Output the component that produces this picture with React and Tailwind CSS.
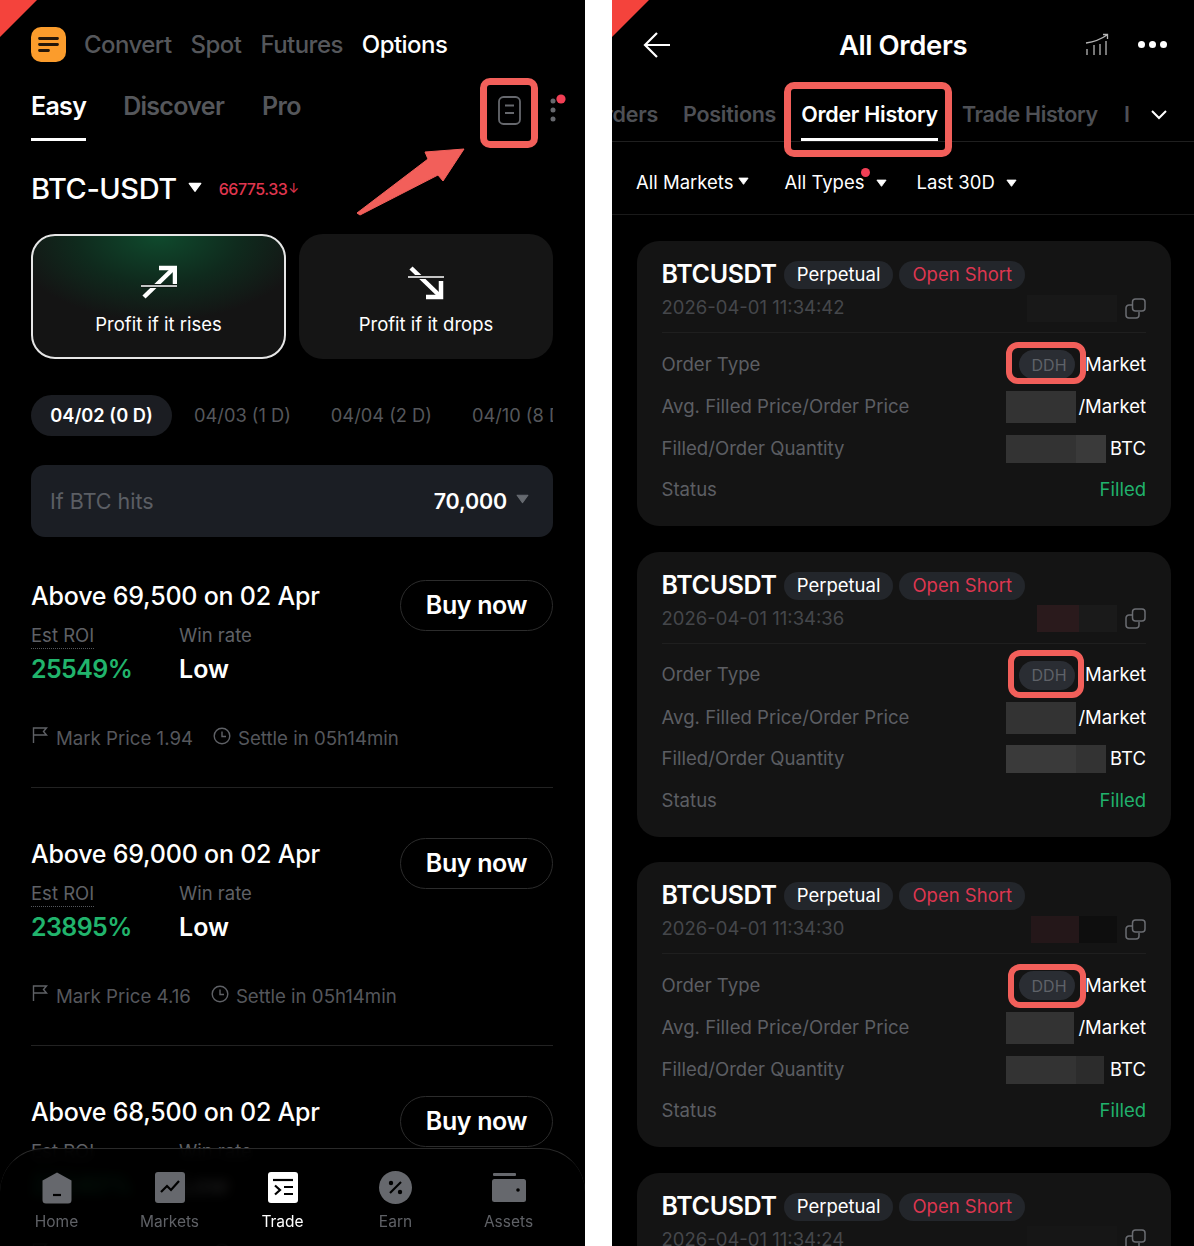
const Corner = () => (
  <svg className="absolute left-0 top-0" width="38" height="38" viewBox="0 0 38 38">
    <polygon points="0,0 37,0 0,37" fill="#f4433c" />
  </svg>
);

const Caret = ({ size = 12, color = '#fff' }) => (
  <svg width={size} height={size * 0.75} viewBox="0 0 12 9">
    <path d="M1 1.2h10L6 8z" fill={color} stroke={color} strokeLinejoin="round" strokeWidth="1" />
  </svg>
);

function Logo() {
  return (
    <svg width="35" height="35" viewBox="0 0 35 35">
      <rect width="35" height="35" rx="10" fill="#fb9c2c" />
      <path d="M8.5 11.5h18M8.5 17.5h18M8.5 23.5h9" stroke="#23160a" strokeWidth="2.8" strokeLinecap="round" />
    </svg>
  );
}

function RiseIcon() {
  return (
    <svg width="36" height="34" viewBox="0 0 36 34" fill="none">
      <path d="M3 32 L33 3" stroke="#fff" strokeWidth="4.5" />
      <path d="M18 3h16v16" stroke="#fff" strokeWidth="4.5" />
      <path d="M0 21h36" stroke="#0e1a14" strokeWidth="4" />
      <path d="M0 21h36" stroke="#fff" strokeWidth="1.6" />
    </svg>
  );
}

function DropIcon() {
  return (
    <svg width="36" height="34" viewBox="0 0 36 34" fill="none">
      <path d="M3 2 L33 31" stroke="#fff" strokeWidth="4.5" />
      <path d="M33 15v16H18" stroke="#fff" strokeWidth="4.5" />
      <path d="M0 11h36" stroke="#151515" strokeWidth="4" />
      <path d="M0 11h36" stroke="#fff" strokeWidth="1.6" />
    </svg>
  );
}

function MarketItem({ strike, roi, mark, settleGap }) {
  return (
    <div className="h-[258px] shrink-0">
      <div className="flex h-[210px] items-start justify-between border-b border-[#222]">
        <div>
          <div className="mt-[2px] text-[25px] leading-[32px] font-medium tracking-[-0.22px] text-white">
            Above {strike} on 02 Apr
          </div>
          <div className="mt-[11px] flex">
            <div className="w-[148px]">
              <span className="inline-block border-b border-dotted border-[#55575c] text-[18.5px] leading-[25px] text-[#5f6166]">Est ROI</span>
              <div className="mt-[5px] text-[25px] leading-[30px] font-semibold tracking-[-0.6px] text-[#21b46c]">{roi}</div>
            </div>
            <div>
              <div className="text-[18.5px] leading-[25px] text-[#5f6166]">Win rate</div>
              <div className="mt-[6px] text-[25px] leading-[30px] font-semibold text-white">Low</div>
            </div>
          </div>
          <div className="mt-[41px] flex items-center text-[18.65px] leading-[26px] text-[#55575c]">
            <svg width="17" height="18" viewBox="0 0 17 18" fill="none" stroke="#5f6166" strokeWidth="1.4" className="mr-[8px] -mt-[6px]">
              <path d="M2.5 17V2h13l-3 3.5 3 3.5h-13" />
            </svg>
            <span>Mark Price {mark}</span>
            <svg width="18" height="18" viewBox="0 0 18 18" fill="none" stroke="#5f6166" strokeWidth="1.4" className="mr-[7px] -mt-[4px]" style={{ marginLeft: settleGap }}>
              <circle cx="9" cy="9" r="7.8" />
              <path d="M9 4.5V9.5H13" />
            </svg>
            <span>Settle in 05h14min</span>
          </div>
        </div>
        <div className="mt-[2px] flex h-[51px] w-[153px] items-center justify-center rounded-full border border-[#2c2c2c] text-[25px] font-semibold tracking-[-0.35px] text-white">
          Buy now
        </div>
      </div>
    </div>
  );
}

function NavIcon({ name }) {
  const fill = name === 'trade' ? '#fff' : '#66686d';
  if (name === 'home') {
    return (
      <svg width="30" height="32" viewBox="0 0 30 32">
        <path d="M15 0.5 L29.5 8.5 V28a3.5 3.5 0 0 1-3.5 3.5H4A3.5 3.5 0 0 1 .5 28V8.5z" fill={fill} />
        <path d="M11 23h8" stroke="#000" strokeWidth="2.2" />
      </svg>
    );
  }
  if (name === 'markets') {
    return (
      <svg width="30" height="31" viewBox="0 0 30 31">
        <rect width="30" height="31" rx="3" fill={fill} />
        <path d="M6 20l6-6 4 4 8-9" stroke="#000" strokeWidth="2.2" fill="none" />
      </svg>
    );
  }
  if (name === 'trade') {
    return (
      <svg width="30" height="31" viewBox="0 0 30 31">
        <rect width="30" height="31" rx="3" fill={fill} />
        <path d="M5 8h20" stroke="#000" strokeWidth="2.2" />
        <path d="M7 13.5l5 4.5-5 4.5" stroke="#000" strokeWidth="2.2" fill="none" />
        <path d="M16 15h9M16 22h9" stroke="#000" strokeWidth="2.2" />
      </svg>
    );
  }
  if (name === 'earn') {
    return (
      <svg width="33" height="33" viewBox="0 0 33 33">
        <circle cx="16.5" cy="16.5" r="16.5" fill={fill} />
        <path d="M22 11l-11 11" stroke="#000" strokeWidth="2.2" />
        <circle cx="12" cy="12" r="2.2" fill="#000" />
        <circle cx="21" cy="21" r="2.2" fill="#000" />
      </svg>
    );
  }
  return (
    <svg width="34" height="29" viewBox="0 0 34 29">
      <rect x="1" y="0" width="23" height="3" rx="1" fill={fill} />
      <rect y="6" width="34" height="23" rx="2.5" fill={fill} />
      <circle cx="26" cy="17" r="1.8" fill="#000" />
    </svg>
  );
}

function BottomNav() {
  const items = [
    ['home', 'Home'],
    ['markets', 'Markets'],
    ['trade', 'Trade'],
    ['earn', 'Earn'],
    ['assets', 'Assets'],
  ];
  return (
    <div className="absolute bottom-0 left-0 right-0 h-[98px] rounded-t-[44px] border-t border-[#2a2a2a] bg-black/90 backdrop-blur-[6px]">
      <div className="flex pt-[22px]">
        {items.map(([name, label]) => (
          <div key={name} className="flex w-[113px] flex-col items-center">
            <div className="flex h-[33px] items-center"><NavIcon name={name} /></div>
            <div className={`mt-[8px] text-[15.5px] leading-[20px] ${name === 'trade' ? 'text-white' : 'text-[#5f6166]'}`}>{label}</div>
          </div>
        ))}
      </div>
    </div>
  );
}

function LeftPhone() {
  return (
    <div className="relative h-[1246px] w-[585px] shrink-0 overflow-hidden bg-black">
      <Corner />
      <div className="pl-[31px] pr-[32px] pt-[27px]">
        <div className="flex h-[35px] items-center text-[24px] font-medium tracking-[-0.55px] text-[#55575b]">
          <Logo />
          <span className="ml-[18px]">Convert</span>
          <span className="ml-[19px]">Spot</span>
          <span className="ml-[19px]">Futures</span>
          <span className="ml-[19px] text-white">Options</span>
        </div>
        <div className="relative mt-[26px] flex h-[53px] text-[25px] font-semibold tracking-[-0.7px] text-[#55575b]">
          <div className="h-[53px] border-b-[3px] border-white pt-[2px] leading-[32px] text-white">Easy</div>
          <div className="ml-[37px] pt-[2px] leading-[32px]">Discover</div>
          <div className="ml-[38px] pt-[2px] leading-[32px]">Pro</div>
          <svg width="16" height="32" viewBox="0 0 16 32" className="absolute left-[519px] top-[3px]">
            <circle cx="3" cy="10" r="2.5" fill="#66686d" />
            <circle cx="3" cy="19" r="2.5" fill="#66686d" />
            <circle cx="3" cy="28" r="2.5" fill="#66686d" />
            <circle cx="11" cy="8" r="4.6" fill="#f23f55" />
          </svg>
        </div>
        <div className="mt-[29px] flex h-[38px] items-center">
          <span className="text-[29px] font-medium tracking-[-0.45px] text-white">BTC-USDT</span>
          <span className="ml-[11px] -mt-[3px]"><Caret size={14} /></span>
          <span className="ml-[17px] text-[16px] font-medium tracking-[-0.5px] text-[#e0364f]">66775.33</span>
          <span className="ml-[1px] text-[13px] text-[#e0364f]">↓</span>
        </div>
        <div className="mt-[26px] flex gap-[13px]">
          <div className="flex h-[125px] w-[255px] shrink-0 flex-col items-center rounded-[24px] border-2 border-[#e6e6e6] bg-[radial-gradient(ellipse_150px_85px_at_50%_0%,#0f4a2d_0%,#0f2a1d_55%,#141414_100%)] pt-[29px]">
            <RiseIcon />
            <div className="mt-[12px] text-[18.5px] leading-[26px] text-white">Profit if it rises</div>
          </div>
          <div className="flex h-[125px] w-[254px] shrink-0 flex-col items-center rounded-[24px] bg-[#151515] pt-[32px]">
            <DropIcon />
            <div className="mt-[11px] text-[18.5px] leading-[26px] text-white">Profit if it drops</div>
          </div>
        </div>
        <div className="mt-[36px] flex h-[41px] items-center overflow-hidden whitespace-nowrap text-[18.25px] text-[#55575b]">
          <div className="flex h-[41px] w-[141px] shrink-0 items-center justify-center rounded-full bg-[#1b1d22] font-semibold text-white">04/02 (0 D)</div>
          <span className="ml-[22px] shrink-0">04/03 (1 D)</span>
          <span className="ml-[40px] shrink-0">04/04 (2 D)</span>
          <span className="ml-[40px] shrink-0">04/10 (8 D)</span>
        </div>
        <div className="mt-[29px] flex h-[72px] items-center justify-between rounded-[14px] bg-[#1b1e24] pl-[19px] pr-[24px]">
          <span className="text-[21.5px] text-[#5b5e64]">If BTC hits</span>
          <div className="flex items-center">
            <span className="text-[21.5px] font-semibold tracking-[-0.2px] text-white">70,000</span>
            <span className="ml-[9px] -mt-[4px]"><Caret size={13} color="#666a70" /></span>
          </div>
        </div>
        <div className="mt-[41px] flex flex-col">
          <MarketItem strike="69,500" roi="25549%" mark="1.94" settleGap={20} />
          <MarketItem strike="69,000" roi="23895%" mark="4.16" settleGap={20} />
          <MarketItem strike="68,500" roi="22240%" mark="7.02" settleGap={20} />
        </div>
      </div>
      <BottomNav />

      {/* annotation */}
      <div className="absolute left-[480px] top-[78px] flex h-[70px] w-[58px] items-center justify-center rounded-[10px] border-[7px] border-[#f25f5a]">
        <svg width="23" height="29" viewBox="0 0 23 29" fill="none" className="-mt-[5px]">
          <rect x="1" y="1" width="21" height="27" rx="4.5" stroke="#66686d" strokeWidth="1.8" />
          <path d="M7 9.5h9M7 17h9" stroke="#66686d" strokeWidth="1.8" />
        </svg>
      </div>
      <svg className="absolute left-[355px] top-[145px]" width="115" height="75" viewBox="0 0 115 75">
        <path d="M2 68 L5 70 L83 30 L88 36 L109 4 L70 7 L73 14 Z" fill="#f25f5a" stroke="#f25f5a" strokeLinejoin="round" />
      </svg>
    </div>
  );
}

function Mask({ w, h, parts }) {
  return (
    <div className="flex shrink-0" style={{ width: w, height: h }}>
      {parts.map(([width, color], i) => (
        <div key={i} style={{ width, backgroundColor: color }} />
      ))}
    </div>
  );
}

function OrderCard({ time, idMask, priceMask, qtyMask }) {
  const rowLabel = 'text-[18.6px] text-[#5c5e63]';
  const rowValue = 'text-[18.5px] text-white';
  return (
    <div className="h-[285px] shrink-0 rounded-[22px] bg-[#141414] pl-[24.5px] pr-[25px] pt-[18px]">
      <div className="flex h-[32px] items-center">
        <span className="text-[25px] font-semibold tracking-[-0.35px] text-white">BTCUSDT</span>
        <span className="ml-[7px] flex h-[28px] items-center rounded-full bg-[#23262b] px-[13px] text-[18.5px] text-white">Perpetual</span>
        <span className="ml-[6px] flex h-[28px] items-center rounded-full bg-[#23262b] px-[13px] text-[18.5px] text-[#dd3650]">Open Short</span>
      </div>
      <div className="mt-[3px] flex h-[28px] items-center justify-between">
        <span className="text-[18.5px] text-[#45474b]">{time}</span>
        <div className="flex items-center">
          <Mask w={90} h={27} parts={idMask} />
          <svg width="21" height="21" viewBox="0 0 21 21" fill="none" stroke="#6a6c71" strokeWidth="1.5" className="ml-[8px]">
            <rect x="7.5" y="1" width="12.5" height="12" rx="3" />
            <path d="M7 7H4a3 3 0 0 0-3 3v7a3 3 0 0 0 3 3h7a3 3 0 0 0 3-3v-3" />
          </svg>
        </div>
      </div>
      <div className="mt-[10px] border-t border-[#1f1f1f]" />
      <div className="mt-[10px] flex h-[43px] items-center justify-between">
        <span className={rowLabel}>Order Type</span>
        <div className="flex items-center">
          <span className="flex h-[29px] w-[56px] items-center justify-center rounded-full bg-[#2a2d33] pl-[4px] text-[16px] text-[#5f6268]">DDH</span>
          <span className={`ml-[10px] ${rowValue}`}>Market</span>
        </div>
      </div>
      <div className="flex h-[42px] items-center justify-between">
        <span className={rowLabel}>Avg. Filled Price/Order Price</span>
        <div className="flex items-center">
          <Mask w={72} h={32} parts={priceMask} />
          <span className={rowValue}>/Market</span>
        </div>
      </div>
      <div className="flex h-[41px] items-center justify-between">
        <span className={rowLabel}>Filled/Order Quantity</span>
        <div className="flex items-center">
          <Mask w={100} h={28} parts={qtyMask} />
          <span className="w-[40px] text-right text-[18.5px] text-white">BTC</span>
        </div>
      </div>
      <div className="flex h-[42px] items-center justify-between">
        <span className={rowLabel}>Status</span>
        <span className="text-[18.5px] text-[#20b26c]">Filled</span>
      </div>
    </div>
  );
}

function RightPhone() {
  return (
    <div className="relative h-[1246px] w-[582px] shrink-0 overflow-hidden bg-black">
      <Corner />
      <div className="relative flex h-[90px] items-center pb-[1px]">
        <svg width="30" height="28" viewBox="0 0 30 28" fill="none" stroke="#fff" strokeWidth="2.2" className="ml-[30px]">
          <path d="M28 14H3M15 2 3 14l12 12" />
        </svg>
        <div className="absolute left-0 top-[27px] w-full text-center text-[27.5px] leading-[36px] font-semibold tracking-[-0.4px] text-white">
          All Orders
        </div>
        <svg width="24" height="24" viewBox="0 0 24 24" fill="none" stroke="#b5b5b5" strokeWidth="1.3" className="absolute left-[473px] top-[33px]">
          <path d="M1 10 C8 9 15 7 22 2M18 1.5h4.5V6" />
          <path d="M2 22v-6M9 22V12M15 22V11M21 22V8" />
        </svg>
        <div className="absolute left-[526px] top-[41px] flex gap-[4px]">
          <span className="h-[7px] w-[7px] rounded-full bg-white" />
          <span className="h-[7px] w-[7px] rounded-full bg-white" />
          <span className="h-[7px] w-[7px] rounded-full bg-white" />
        </div>
      </div>
      <div className="relative flex h-[52px] items-start border-b border-[#1f1f1f] text-[21.5px] font-semibold tracking-[-0.26px] text-[#4e5055]">
        <div className="flex w-[46px] justify-end overflow-hidden leading-[48px]">Orders</div>
        <div className="ml-[25px] leading-[48px]">Positions</div>
        <div className="ml-[25px] h-[52px] leading-[48px] text-white">
          Order History
          <div className="h-[3px] bg-white" />
        </div>
        <div className="ml-[24px] leading-[48px] tracking-[-0.36px]">Trade History</div>
        <div className="ml-[26px] leading-[48px]">I</div>
        <svg width="16" height="10" viewBox="0 0 16 10" fill="none" stroke="#fff" strokeWidth="2" className="absolute left-[539px] top-[20px]">
          <path d="M1 1l7 7 7-7" />
        </svg>
      </div>
      <div className="flex h-[73px] items-center border-b border-[#1a1a1a] pl-[24px] pt-[10px] text-[18.5px] text-white">
        <span>All Markets</span>
        <span className="ml-[5px] -mt-[3px]"><Caret size={11} /></span>
        <span className="relative ml-[35px]">
          All Types
          <span className="absolute right-[-6px] top-[-1px] h-[9px] w-[9px] rounded-full bg-[#f23f55]" />
        </span>
        <span className="ml-[12px]"><Caret size={11} /></span>
        <span className="ml-[29px]">Last 30D</span>
        <span className="ml-[11px]"><Caret size={11} /></span>
      </div>
      <div className="mt-[26px] flex flex-col gap-[25.5px] pl-[25px] pr-[23px]">
        <OrderCard
          time="2026-04-01 11:34:42"
          idMask={[[90, '#181818']]}
          priceMask={[[70, '#333333'], [2, '#141414']]}
          qtyMask={[[70, '#333333'], [30, '#3a3a3a']]}
        />
        <OrderCard
          time="2026-04-01 11:34:36"
          idMask={[[10, '#141414'], [42, '#2a1a1c'], [38, '#1a1a1a']]}
          priceMask={[[70, '#333333'], [2, '#141414']]}
          qtyMask={[[70, '#3a3a3a'], [30, '#333333']]}
        />
        <OrderCard
          time="2026-04-01 11:34:30"
          idMask={[[4, '#141414'], [48, '#241719'], [38, '#0e0e0e']]}
          priceMask={[[68, '#333333'], [4, '#141414']]}
          qtyMask={[[70, '#333333'], [28, '#2c2c2c'], [2, '#141414']]}
        />
        <OrderCard
          time="2026-04-01 11:34:24"
          idMask={[[90, '#161616']]}
          priceMask={[[70, '#333333'], [2, '#141414']]}
          qtyMask={[[100, '#333333']]}
        />
      </div>

      {/* annotations */}
      <div className="absolute left-[172px] top-[82px] h-[75px] w-[168px] rounded-[10px] border-[7px] border-[#f25f5a]" />
      <div className="absolute left-[394px] top-[342px] h-[42px] w-[80px] rounded-[12px] border-[6px] border-[#f25f5a]" />
      <div className="absolute left-[396px] top-[650px] h-[48px] w-[76px] rounded-[12px] border-[6px] border-[#f25f5a]" />
      <div className="absolute left-[396px] top-[964px] h-[44px] w-[78px] rounded-[12px] border-[6px] border-[#f25f5a]" />
    </div>
  );
}

export default function App() {
  return (
    <div className="flex h-[1246px] w-[1194px] justify-between overflow-hidden bg-white font-['Inter',sans-serif]">
      <LeftPhone />
      <RightPhone />
    </div>
  );
}
